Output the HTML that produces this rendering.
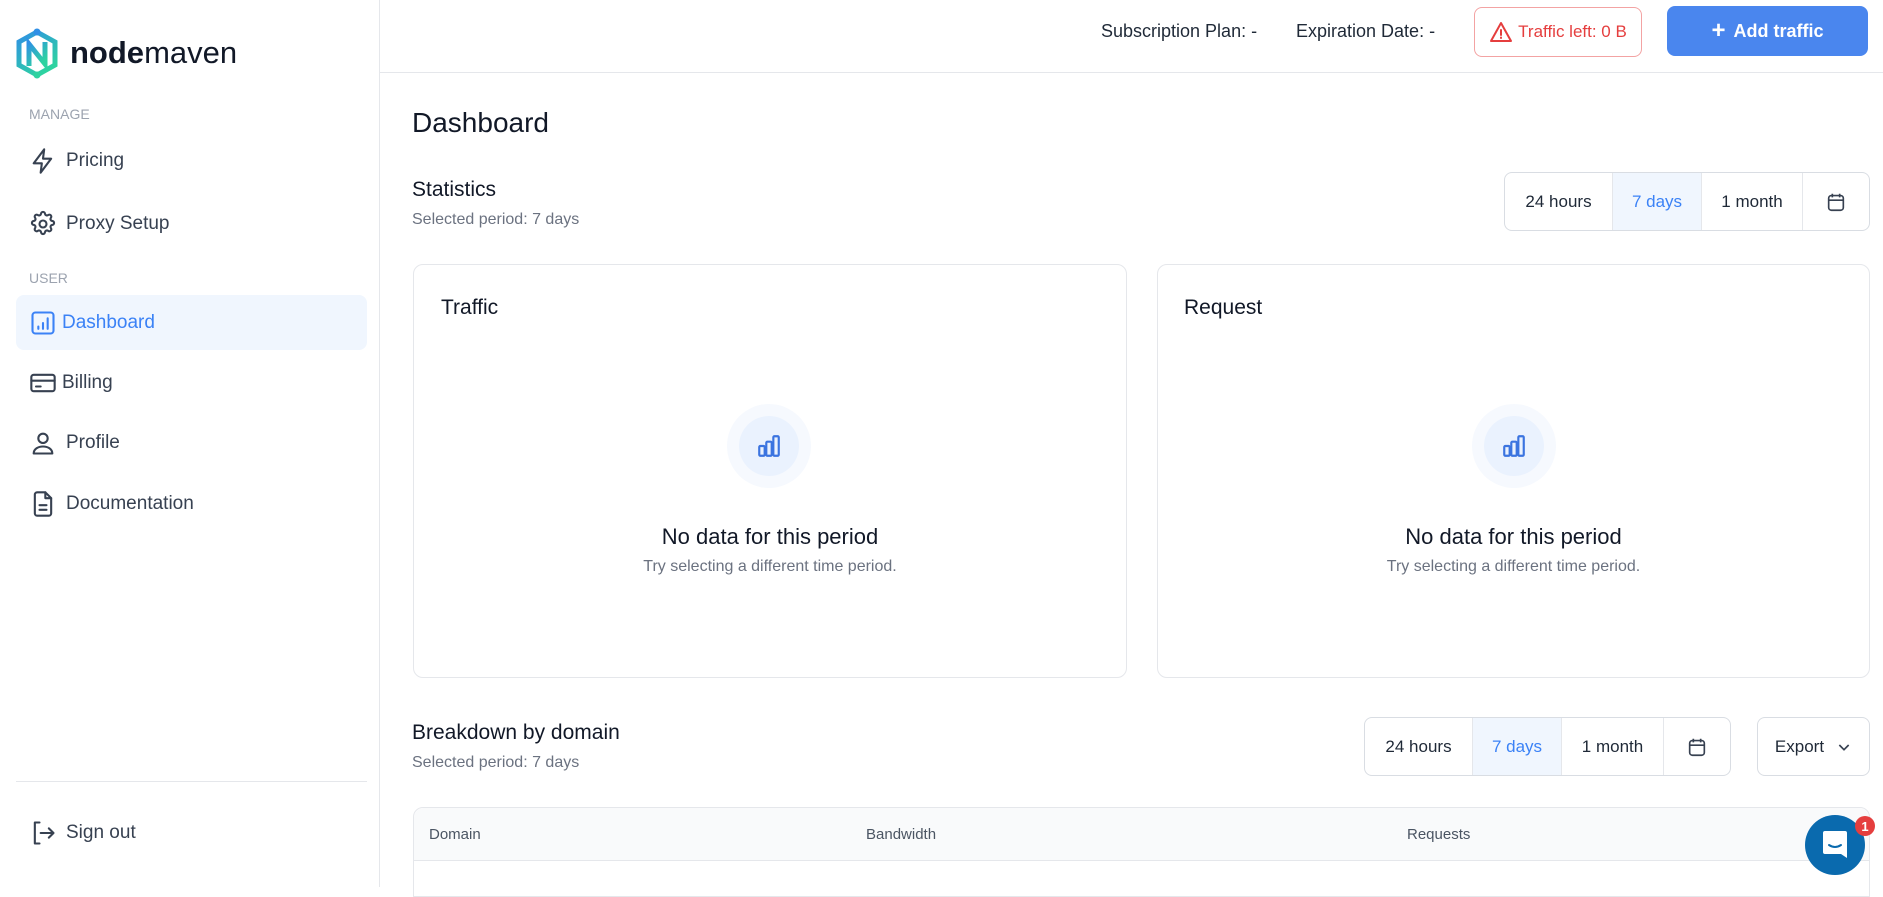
<!DOCTYPE html>
<html><head><meta charset="utf-8"><style>
*{box-sizing:border-box;margin:0;padding:0}
body{width:1883px;height:887px;overflow:hidden;background:#fff;font-family:"Liberation Sans",sans-serif;color:#1f2937;position:relative}
.a{position:absolute}
.side{left:0;top:0;width:380px;height:887px;border-right:1px solid #e5e7eb;background:#fff}
.sec{font-size:14px;color:#9ca3af;left:29px}
.nav{left:29px;height:30px;display:flex;align-items:center;font-size:19px;color:#374151}
.nav svg{width:28px;height:28px;margin-right:9px;fill:none;stroke:#374151;stroke-width:1.8;stroke-linecap:round;stroke-linejoin:round}
.hdr{left:380px;top:0;right:0;height:73px;border-bottom:1px solid #e5e7eb}
.seg{display:flex;border:1px solid #d9dde3;border-radius:8px;overflow:hidden;height:100%}
.seg div{display:flex;align-items:center;justify-content:center;font-size:17px;color:#1f2937;border-right:1px solid #e5e7eb}
.seg div:last-child{border-right:none}
.seg .on{background:#f0f6fe;color:#3b82f6}
.card{border:1px solid #e5e7eb;border-radius:10px;background:#fff}
.ct{font-size:21px;color:#111827}
.empty{text-align:center}
</style></head><body>
<div class="a side">
  <svg class="a" style="left:15px;top:28px" width="44" height="51" viewBox="0 0 44 51">
    <defs><linearGradient id="g" x1="0" y1="0" x2="0.6" y2="1"><stop offset="0" stop-color="#2f8fe6"/><stop offset="1" stop-color="#2ed3a0"/></linearGradient></defs>
    <path d="M22 4 L40 14 L40 37 L22 47 L4 37 L4 14 Z" fill="none" stroke="url(#g)" stroke-width="5"/>
    <path d="M14 38 L14 16 L30 36 L30 14" fill="none" stroke="url(#g)" stroke-width="5"/>
    <circle cx="22" cy="4" r="3.5" fill="#2f8fe6"/><circle cx="22" cy="47" r="3.5" fill="#2ed3a0"/>
  </svg>
  <div class="a" style="left:70px;top:35px;font-size:31px;color:#111827"><b>node</b>maven</div>
  <div class="a sec" style="top:106px">MANAGE</div>
  <div class="a nav" style="top:146px"><svg viewBox="0 0 24 24"><path d="M13 2L4 14h7l-1 8 9-12h-7l1-8z"/></svg>Pricing</div>
  <div class="a nav" style="top:209px"><svg viewBox="0 0 24 24"><circle cx="12" cy="12" r="3"/><path d="M10.3 3.3a1.7 1.7 0 013.4 0 1.7 1.7 0 002.6 1.1 1.7 1.7 0 012.4 2.4 1.7 1.7 0 001.1 2.6 1.7 1.7 0 010 3.4 1.7 1.7 0 00-1.1 2.6 1.7 1.7 0 01-2.4 2.4 1.7 1.7 0 00-2.6 1.1 1.7 1.7 0 01-3.4 0 1.7 1.7 0 00-2.6-1.1 1.7 1.7 0 01-2.4-2.4 1.7 1.7 0 00-1.1-2.6 1.7 1.7 0 010-3.4 1.7 1.7 0 001.1-2.6 1.7 1.7 0 012.4-2.4 1.7 1.7 0 002.6-1.1z"/></svg>Proxy Setup</div>
  <div class="a sec" style="top:270px">USER</div>
  <div class="a" style="left:16px;top:295px;width:351px;height:55px;background:#f0f6fe;border-radius:8px"></div>
  <div class="a nav" style="top:308px;color:#3b82f6"><svg viewBox="0 0 24 24" style="stroke:#3b82f6;margin-right:5px"><rect x="3" y="3" width="18" height="18" rx="2.5"/><path d="M8 17v-2M12 17v-5M16 17V8"/></svg>Dashboard</div>
  <div class="a nav" style="top:368px"><svg viewBox="0 0 24 24" style="margin-right:5px"><rect x="2" y="5" width="20" height="14" rx="2"/><path d="M2 10h20M6 15h4"/></svg>Billing</div>
  <div class="a nav" style="top:428px"><svg viewBox="0 0 24 24"><circle cx="12" cy="8" r="4"/><path d="M4 21c0-4 4-6 8-6s8 2 8 6z"/></svg>Profile</div>
  <div class="a nav" style="top:489px"><svg viewBox="0 0 24 24"><path d="M14 2H7a2 2 0 00-2 2v16a2 2 0 002 2h10a2 2 0 002-2V7z"/><path d="M14 2v5h5M9 13h6M9 17h6"/></svg>Documentation</div>
  <div class="a" style="left:16px;top:781px;width:351px;height:1px;background:#e5e7eb"></div>
  <div class="a nav" style="top:818px"><svg viewBox="0 0 24 24"><path d="M9 3H5v18h4M10 12h11M17 8l4 4-4 4"/></svg>Sign out</div>
</div>

<div class="a hdr"></div>
<div class="a" style="left:1101px;top:21px;font-size:18px;color:#1f2937">Subscription Plan: -</div>
<div class="a" style="left:1296px;top:21px;font-size:18px;color:#1f2937">Expiration Date: -</div>
<div class="a" style="left:1474px;top:7px;width:168px;height:50px;border:1px solid #f3a3a3;border-radius:8px;display:flex;align-items:center;justify-content:center;color:#e53e3e;font-size:17px">
<svg width="24" height="22" viewBox="0 0 24 22" style="margin-right:5px" fill="none" stroke="#e53e3e" stroke-width="2" stroke-linejoin="round"><path d="M12 2L2 20h20z"/><path d="M12 9v5M12 16.5v.5" stroke-linecap="round"/></svg>Traffic left: 0 B</div>
<div class="a" style="left:1667px;top:6px;width:201px;height:50px;background:#4a86ee;border-radius:8px;display:flex;align-items:center;justify-content:center;color:#fff;font-size:18px;font-weight:bold"><span style="font-size:24px;margin-right:8px;line-height:1">+</span>Add traffic</div>

<div class="a" style="left:412px;top:107px;font-size:28px;color:#111827">Dashboard</div>
<div class="a ct" style="left:412px;top:178px">Statistics</div>
<div class="a" style="left:412px;top:211px;font-size:16px;color:#6b7280">Selected period: 7 days</div>
<div class="a" style="left:1504px;top:172px;width:366px;height:59px"><div class="seg">
<div style="width:108px">24 hours</div><div class="on" style="width:89px">7 days</div><div style="width:101px">1 month</div><div style="flex:1"><svg width="22" height="22" viewBox="0 0 24 24" fill="none" stroke="#374151" stroke-width="1.8"><rect x="4" y="5" width="16" height="16" rx="3"/><path d="M4 10h16M8 3v4M16 3v4"/></svg></div></div></div>

<div class="a card" style="left:413px;top:264px;width:714px;height:414px">
 <div class="a ct" style="left:27px;top:31px">Traffic</div>
</div>
<div class="a card" style="left:1157px;top:264px;width:713px;height:414px">
 <div class="a ct" style="left:26px;top:31px">Request</div>
</div>
<div class="a" style="left:727px;top:404px;width:84px;height:84px;border-radius:50%;background:#f6f9fe"></div>
<div class="a" style="left:739px;top:416px;width:60px;height:60px;border-radius:50%;background:#eaf2fe"></div>
<svg class="a" style="left:756px;top:433px" width="26" height="26" viewBox="0 0 24 24" fill="none" stroke="#3b74e0" stroke-width="2"><rect x="3" y="12" width="5" height="9" rx="1"/><rect x="9.5" y="8" width="5" height="13" rx="1"/><rect x="16" y="3" width="5" height="18" rx="1"/></svg>
<div class="a" style="left:1472px;top:404px;width:84px;height:84px;border-radius:50%;background:#f6f9fe"></div>
<div class="a" style="left:1484px;top:416px;width:60px;height:60px;border-radius:50%;background:#eaf2fe"></div>
<svg class="a" style="left:1501px;top:433px" width="26" height="26" viewBox="0 0 24 24" fill="none" stroke="#3b74e0" stroke-width="2"><rect x="3" y="12" width="5" height="9" rx="1"/><rect x="9.5" y="8" width="5" height="13" rx="1"/><rect x="16" y="3" width="5" height="18" rx="1"/></svg>
<div class="a empty" style="left:413px;width:714px;top:524px;font-size:22px;color:#111827">No data for this period</div>
<div class="a empty" style="left:413px;width:714px;top:558px;font-size:16px;color:#6b7280">Try selecting a different time period.</div>
<div class="a empty" style="left:1157px;width:713px;top:524px;font-size:22px;color:#111827">No data for this period</div>
<div class="a empty" style="left:1157px;width:713px;top:558px;font-size:16px;color:#6b7280">Try selecting a different time period.</div>

<div class="a ct" style="left:412px;top:721px">Breakdown by domain</div>
<div class="a" style="left:412px;top:754px;font-size:16px;color:#6b7280">Selected period: 7 days</div>
<div class="a" style="left:1364px;top:717px;width:367px;height:59px"><div class="seg">
<div style="width:108px">24 hours</div><div class="on" style="width:89px">7 days</div><div style="width:102px">1 month</div><div style="flex:1"><svg width="22" height="22" viewBox="0 0 24 24" fill="none" stroke="#374151" stroke-width="1.8"><rect x="4" y="5" width="16" height="16" rx="3"/><path d="M4 10h16M8 3v4M16 3v4"/></svg></div></div></div>
<div class="a" style="left:1757px;top:717px;width:113px;height:59px;border:1px solid #d9dde3;border-radius:8px;display:flex;align-items:center;justify-content:center;font-size:17px">Export<svg width="16" height="16" viewBox="0 0 24 24" style="margin-left:12px" fill="none" stroke="#374151" stroke-width="2.5"><path d="M5 9l7 7 7-7"/></svg></div>

<div class="a" style="left:413px;top:807px;width:1457px;height:90px;border:1px solid #e5e7eb;border-radius:10px 10px 0 0"></div>
<div class="a" style="left:414px;top:808px;width:1455px;height:53px;background:#f9fafb;border-bottom:1px solid #e5e7eb;border-radius:10px 10px 0 0"></div>
<div class="a" style="left:429px;top:826px;font-size:15px;color:#4b5563">Domain</div>
<div class="a" style="left:866px;top:826px;font-size:15px;color:#4b5563">Bandwidth</div>
<div class="a" style="left:1407px;top:826px;font-size:15px;color:#4b5563">Requests</div>

<div class="a" style="left:1805px;top:815px;width:60px;height:60px;border-radius:50%;background:#0a6aae"></div>
<svg class="a" style="left:1822px;top:830px" width="26" height="30" viewBox="0 0 26 30"><path d="M3 1h20a2 2 0 012 2v25l-6-4H3a2 2 0 01-2-2V3a2 2 0 012-2z" fill="#fff"/><path d="M7 15q6 4 12 0" stroke="#0a6aae" stroke-width="2" fill="none" stroke-linecap="round"/></svg>
<div class="a" style="left:1855px;top:816px;width:20px;height:20px;border-radius:50%;background:#e53e3e;color:#fff;font-size:13px;font-weight:bold;display:flex;align-items:center;justify-content:center">1</div>
</body></html>
